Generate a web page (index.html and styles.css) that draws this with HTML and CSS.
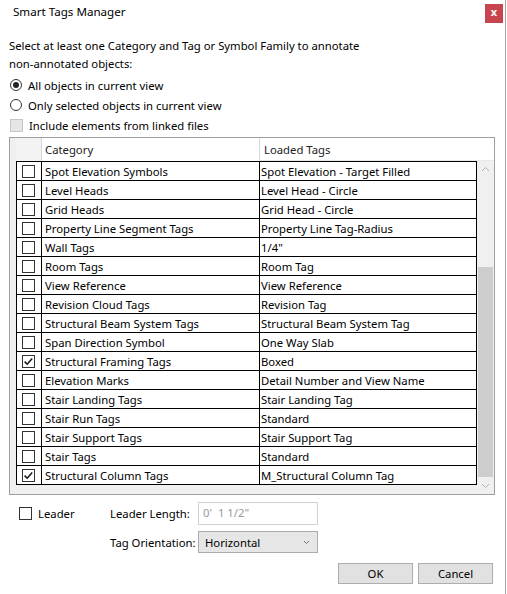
FILE: index.html
```html
<!DOCTYPE html>
<html lang="en">
<head>
    <meta charset="UTF-8" />
    <meta name="viewport" content="width=device-width, initial-scale=1.0" />
    <title>Smart Tags Manager</title>
    <link rel="stylesheet" href="styles.css">
</head>
<body>
    <div class="window">
        <div class="titlebar">
            <span class="title">Smart Tags Manager</span>
            <button class="close-button" aria-label="Close">x</button>
        </div>

        <div class="content">
            <p class="intro">Select at least one Category and Tag or Symbol Family to annotate<br>non-annotated objects:</p>

            <label class="option"><span class="radio checked"></span>All objects in current view</label>
            <label class="option"><span class="radio"></span>Only selected objects in current view</label>
            <label class="option"><span class="checkbox disabled"></span>Include elements from linked files</label>

            <div class="grid">
                <div class="grid-head">
                    <div class="head-gutter"></div>
                    <div class="head-cell head-check"></div>
                    <div class="head-cell head-category">Category</div>
                    <div class="head-cell head-tags">Loaded Tags</div>
                </div>

                <div class="grid-main">
                    <div class="grid-rows">
                        <div class="row"><div class="cell cell-check"><span class="checkbox"></span></div><div class="cell cell-category">Spot Elevation Symbols</div><div class="cell cell-tags">Spot Elevation - Target Filled</div></div>
                        <div class="row"><div class="cell cell-check"><span class="checkbox"></span></div><div class="cell cell-category">Level Heads</div><div class="cell cell-tags">Level Head - Circle</div></div>
                        <div class="row"><div class="cell cell-check"><span class="checkbox"></span></div><div class="cell cell-category">Grid Heads</div><div class="cell cell-tags">Grid Head - Circle</div></div>
                        <div class="row"><div class="cell cell-check"><span class="checkbox"></span></div><div class="cell cell-category">Property Line Segment Tags</div><div class="cell cell-tags">Property Line Tag-Radius</div></div>
                        <div class="row"><div class="cell cell-check"><span class="checkbox"></span></div><div class="cell cell-category">Wall Tags</div><div class="cell cell-tags">1/4"</div></div>
                        <div class="row"><div class="cell cell-check"><span class="checkbox"></span></div><div class="cell cell-category">Room Tags</div><div class="cell cell-tags">Room Tag</div></div>
                        <div class="row"><div class="cell cell-check"><span class="checkbox"></span></div><div class="cell cell-category">View Reference</div><div class="cell cell-tags">View Reference</div></div>
                        <div class="row"><div class="cell cell-check"><span class="checkbox"></span></div><div class="cell cell-category">Revision Cloud Tags</div><div class="cell cell-tags">Revision Tag</div></div>
                        <div class="row"><div class="cell cell-check"><span class="checkbox"></span></div><div class="cell cell-category">Structural Beam System Tags</div><div class="cell cell-tags">Structural Beam System Tag</div></div>
                        <div class="row"><div class="cell cell-check"><span class="checkbox"></span></div><div class="cell cell-category">Span Direction Symbol</div><div class="cell cell-tags">One Way Slab</div></div>
                        <div class="row"><div class="cell cell-check"><span class="checkbox checked"><svg viewBox="0 0 13 13" width="13" height="13"><path d="M2.6 6.6 L5.2 9.2 L10.2 3.4" /></svg></span></div><div class="cell cell-category">Structural Framing Tags</div><div class="cell cell-tags">Boxed</div></div>
                        <div class="row"><div class="cell cell-check"><span class="checkbox"></span></div><div class="cell cell-category">Elevation Marks</div><div class="cell cell-tags">Detail Number and View Name</div></div>
                        <div class="row"><div class="cell cell-check"><span class="checkbox"></span></div><div class="cell cell-category">Stair Landing Tags</div><div class="cell cell-tags">Stair Landing Tag</div></div>
                        <div class="row"><div class="cell cell-check"><span class="checkbox"></span></div><div class="cell cell-category">Stair Run Tags</div><div class="cell cell-tags">Standard</div></div>
                        <div class="row"><div class="cell cell-check"><span class="checkbox"></span></div><div class="cell cell-category">Stair Support Tags</div><div class="cell cell-tags">Stair Support Tag</div></div>
                        <div class="row"><div class="cell cell-check"><span class="checkbox"></span></div><div class="cell cell-category">Stair Tags</div><div class="cell cell-tags">Standard</div></div>
                        <div class="row"><div class="cell cell-check"><span class="checkbox checked"><svg viewBox="0 0 13 13" width="13" height="13"><path d="M2.6 6.6 L5.2 9.2 L10.2 3.4" /></svg></span></div><div class="cell cell-category">Structural Column Tags</div><div class="cell cell-tags">M_Structural Column Tag</div></div>
                    </div>

                    <div class="scrollbar">
                        <div class="scroll-button">
                            <svg viewBox="0 0 17 17" width="17" height="17"><path d="M5 10 L8.5 6.5 L12 10" /></svg>
                        </div>
                        <div class="scroll-track"><div class="scroll-thumb"></div></div>
                        <div class="scroll-button">
                            <svg viewBox="0 0 17 17" width="17" height="17"><path d="M5 7 L8.5 10.5 L12 7" /></svg>
                        </div>
                    </div>
                </div>
            </div>

            <div class="options">
                <label class="leader"><span class="checkbox"></span>Leader</label>
                <span class="field-label">Leader Length:</span>
                <div class="text-field">0'&nbsp;&nbsp;1 1/2"</div>

                <span class="spacer"></span>
                <span class="field-label">Tag Orientation:</span>
                <div class="combo">
                    <span>Horizontal</span>
                    <svg viewBox="0 0 7 5" width="7" height="5"><path d="M1 1 L3.5 3.5 L6 1" /></svg>
                </div>
            </div>

            <div class="actions">
                <button class="dialog-button">OK</button>
                <button class="dialog-button">Cancel</button>
            </div>
        </div>
    </div>
</body>
</html>
```

FILE: styles.css
```css
:root {
    --window-border: #a8a8a8;
    --text-color: #000000;
    --muted-text: #9a9a9a;
    --control-border: #333333;
    --grid-border: #a0a0a0;
    --grid-line: #000000;
    --panel-background: #f0f0f0;
    --close-red: #c8444f;
    --button-background: #e1e1e1;
    --button-border: #adadad;
}

* {
    box-sizing: border-box;
}

body {
    margin: 0;
    background: #ffffff;
    font-family: "Segoe UI", "Noto Sans", sans-serif;
    font-size: 11.3px;
    color: var(--text-color);
}

.window {
    width: 506px;
    height: 594px;
    border-right: 1px solid var(--window-border);
    background: #ffffff;
}

.titlebar {
    height: 30px;
    display: flex;
    justify-content: space-between;
    align-items: flex-start;
    padding: 4px 2px 0 13px;
}

.title {
    line-height: 16px;
    font-size: 11.6px;
}

.close-button {
    width: 18px;
    height: 19px;
    border: none;
    padding: 0 0 3px 0;
    background: var(--close-red);
    color: #ffffff;
    font-family: inherit;
    font-size: 11px;
    font-weight: 700;
    line-height: 16px;
}

.content {
    padding: 0 10px 0 9px;
}

.intro {
    margin: 7px 0 2px 0;
    line-height: 18px;
}

.option {
    height: 20px;
    display: flex;
    align-items: center;
    gap: 6px;
    padding-left: 1px;
}

.radio {
    width: 12px;
    height: 12px;
    border: 1px solid var(--control-border);
    border-radius: 50%;
    display: flex;
    align-items: center;
    justify-content: center;
    background: #ffffff;
}

.radio.checked::after {
    content: "";
    width: 6px;
    height: 6px;
    border-radius: 50%;
    background: #222222;
}

.checkbox {
    width: 13px;
    height: 13px;
    border: 1px solid var(--control-border);
    background: #ffffff;
    display: inline-flex;
    flex-shrink: 0;
}

.checkbox.disabled {
    border-color: #c6c6c6;
    background: #e6e6e6;
}

.checkbox svg {
    margin: -1px;
}

.checkbox svg path {
    fill: none;
    stroke: #1a1a1a;
    stroke-width: 1.6;
}

/* data grid */

.grid {
    margin-top: 2px;
    width: 486px;
    border: 1px solid var(--grid-border);
    background: var(--panel-background);
}

.grid-head {
    height: 23px;
    display: flex;
    background: #ffffff;
}

.head-gutter {
    width: 6px;
    background: var(--panel-background);
}

.head-cell {
    display: flex;
    align-items: center;
    padding-left: 3px;
    border-right: 1px solid #d6d6d6;
    color: #222222;
}

.head-check {
    width: 26px;
    background: #f3f3f3;
}

.head-category {
    width: 218px;
}

.head-tags {
    flex: 1;
    padding-left: 4px;
    border-right: none;
    border-bottom: 1px solid #e8e8e8;
}

.grid-main {
    height: 333px;
    display: flex;
}

.grid-rows {
    width: 467px;
    padding-left: 6px;
}

.row {
    height: 19px;
    display: flex;
    background: #ffffff;
    border-left: 1px solid var(--grid-line);
    border-bottom: 1px solid var(--grid-line);
}

.row:first-child {
    height: 20px;
    border-top: 1px solid var(--grid-line);
}

.cell {
    display: flex;
    align-items: center;
    border-right: 1px solid var(--grid-line);
    white-space: nowrap;
}

.cell-check {
    width: 25px;
    padding-left: 5px;
}

.cell-category {
    width: 218px;
    padding-left: 3px;
}

.cell-tags {
    width: 217px;
    padding-left: 1px;
}

.scrollbar {
    width: 17px;
    display: flex;
    flex-direction: column;
    background: var(--panel-background);
}

.scroll-button {
    height: 17px;
}

.scroll-button svg path {
    fill: none;
    stroke: #b4b4b4;
    stroke-width: 1;
}

.scroll-track {
    flex: 1;
    display: flex;
    flex-direction: column;
    justify-content: flex-end;
    padding: 0 1px;
}

.scroll-thumb {
    height: 210px;
    background: #cdcdcd;
}

/* bottom options */

.options {
    margin-top: 7px;
    display: grid;
    grid-template-columns: 91px 78px 120px;
    grid-template-rows: 23px 22px;
    column-gap: 10px;
    row-gap: 6px;
    align-items: center;
}

.leader {
    display: flex;
    align-items: center;
    gap: 6px;
    padding-left: 10px;
}

.field-label {
    text-align: right;
    white-space: nowrap;
}

.text-field {
    height: 23px;
    border: 1px solid #d2d2d2;
    color: var(--muted-text);
    padding: 2px 4px;
    line-height: 16px;
}

.combo {
    height: 22px;
    border: 1px solid #acacac;
    background: #e6e6e6;
    display: flex;
    align-items: center;
    justify-content: space-between;
    padding: 1px 7px 0 6px;
}

.combo svg path {
    fill: none;
    stroke: #707070;
    stroke-width: 1;
}

.actions {
    margin-top: 10px;
    display: flex;
    justify-content: flex-end;
    gap: 5px;
    padding-right: 2px;
}

.dialog-button {
    width: 75px;
    height: 21px;
    border: 1px solid var(--button-border);
    background: var(--button-background);
    font-family: inherit;
    font-size: 11.3px;
    color: var(--text-color);
    padding: 0;
}
```
